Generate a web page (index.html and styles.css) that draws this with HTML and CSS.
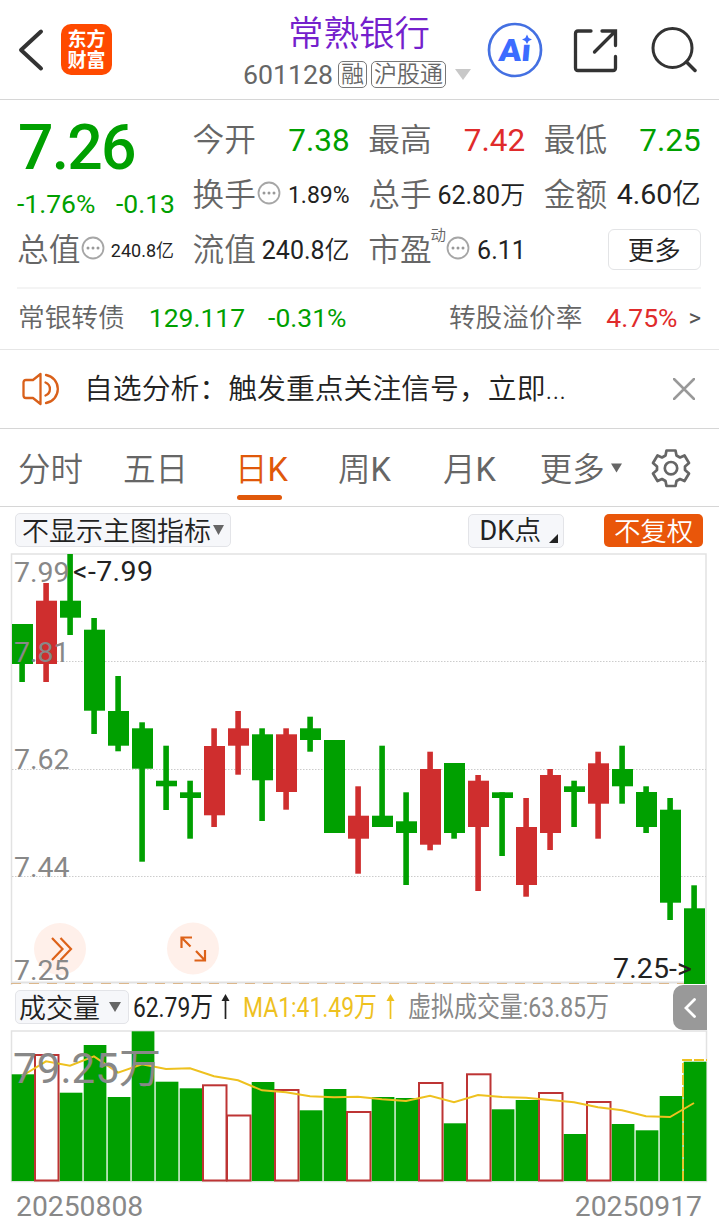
FILE: index.html
```html
<!DOCTYPE html>
<html lang="zh-CN">
<head>
<meta charset="utf-8">
<title>常熟银行 601128</title>
<link rel="stylesheet" href="styles.css">
</head>
<body>
<header class="header">
  <svg class="back" width="30" height="50" viewBox="0 0 30 50"><path d="M25 6.500L5 25L25 43.500" fill="none" stroke="#333" stroke-width="4" stroke-linecap="round" stroke-linejoin="round"/></svg>
  <div class="logo"><span>东方</span><span>财富</span></div>
  <div class="title">
    <h1>常熟银行</h1>
    <div class="code"><span>601128</span><b class="tag">融</b><b class="tag">沪股通</b><svg width="16" height="11" viewBox="0 0 16 11"><path d="M0 0H16L8 11Z" fill="#c8c8c8"/></svg></div>
  </div>
  <svg class="ic" width="56" height="56" viewBox="0 0 56 56"><text class="ai" transform="translate(11 38.500) skewX(-5)" textLength="32" lengthAdjust="spacingAndGlyphs">Ai</text><path d="M35 11H45.500V21.500H35Z" fill="#fff"/><path d="M40 12.500L41.700 16L45 17.500L41.700 19L40 22L38.300 19L35 17.500L38.300 16Z" fill="#3c6cff"/><circle cx="28" cy="28" r="26" fill="none" stroke="#4470e2" stroke-width="2.700"/></svg>
  <svg class="ic" width="46" height="46" viewBox="0 0 46 46"><path d="M18 4H5Q2.500 4 2.500 6.500V41Q2.500 43.500 5 43.500H40Q42.500 43.500 42.500 41V29.500M29 4H42.500V18.500M42 4.500L21.500 25" fill="none" stroke="#333" stroke-width="3.300" stroke-linecap="round"/></svg>
  <svg class="ic search" width="46" height="46" viewBox="0 0 46 46"><circle cx="21.500" cy="21" r="19.500" fill="none" stroke="#333" stroke-width="3"/><path d="M35.500 35L44 43.500" stroke="#333" stroke-width="3.500" stroke-linecap="round"/></svg>
</header>

<section class="quote">
  <div class="price">
    <strong>7.26</strong>
    <div class="change"><span>-1.76%</span><span>-0.13</span></div>
  </div>
  <div class="cell"><i>今开</i><em class="s31 green">7.38</em></div>
  <div class="cell"><i>最高</i><em class="s31 red">7.42</em></div>
  <div class="cell"><i>最低</i><em class="s31 green">7.25</em></div>
  <div class="cell"><i>换手</i><svg class="dots" viewBox="0 0 24 24"><use href="#dots"/></svg><em class="s23">1.89%</em></div>
  <div class="cell"><i>总手</i><em class="s25">62.80<u>万</u></em></div>
  <div class="cell"><i>金额</i><em class="s28">4.60<u>亿</u></em></div>
  <div class="cell"><i>总值</i><svg class="dots" viewBox="0 0 24 24"><g id="dots"><circle cx="12" cy="12" r="10.500" fill="none" stroke="#a6a6a6" stroke-width="1.800"/><g fill="#999"><circle cx="7" cy="12" r="1.500"/><circle cx="12" cy="12" r="1.500"/><circle cx="17" cy="12" r="1.500"/></g></g></svg><em class="s18">240.8<u>亿</u></em></div>
  <div class="cell"><i>流值</i><em class="s25">240.8<u>亿</u></em></div>
  <div class="cell pe"><i>市盈</i><sup>动</sup><svg class="dots" viewBox="0 0 24 24"><use href="#dots"/></svg><em class="s25">6.11</em></div>
  <div class="cell"><button class="more">更多</button></div>
</section>

<section class="bond">
  <span class="name">常银转债</span><span class="green val">129.117</span><span class="green">-0.31%</span>
  <span class="name rate">转股溢价率</span><span class="red">4.75%</span><span class="gt">&gt;</span>
</section>

<section class="notice">
  <svg width="40" height="34" viewBox="0 0 40 34"><g fill="none" stroke="#d9601a" stroke-width="2.300" stroke-linejoin="round" stroke-linecap="round"><path d="M18.500 2L11 8H4Q1.500 8 1.500 10.500V23.500Q1.500 26 4 26H11L18.500 32Z"/><path d="M23.500 10.500A7 7 0 0 1 23.500 23.500M24 3A14.200 14.200 0 0 1 24 31"/></g></svg>
  <span class="msg">自选分析：触发重点关注信号，立即...</span>
  <svg class="close" width="22" height="22" viewBox="0 0 22 22"><path d="M1 1L21 21M21 1L1 21" stroke="#999" stroke-width="2.500" stroke-linecap="round"/></svg>
</section>

<nav class="tabs">
  <a>分时</a><a>五日</a><a class="on">日<span>K</span></a><a>周<span>K</span></a><a>月<span>K</span></a><a>更多<svg width="11" height="10" viewBox="0 0 12 10"><path d="M0 0H12L6 10Z" fill="#666"/></svg></a>
  <svg class="gear" width="40" height="40" viewBox="-20 -20 40 40"><g fill="none" stroke="#666" stroke-width="2.700" stroke-linejoin="round"><path d="M-4.500 -17.500H4.500L5.500 -12.500L9 -10.500L13.500 -12.500L18 -5L14 -1.500V2L18 5.500L13.500 13L9 11L5.500 13L4.500 18H-4.500L-5.500 13L-9 11L-13.500 13L-18 5.500L-14 2V-1.500L-18 -5L-13.500 -12.500L-9 -10.500L-5.500 -12.500Z"/><circle cx="0" cy="0.200" r="6.200"/></g></svg>
</nav>

<div class="tools">
  <span class="chip main">不显示主图指标<svg width="11" height="10" viewBox="0 0 11 10"><path d="M0 0H11L5.500 10Z" fill="#666"/></svg></span>
  <span class="chip dk"><span>DK</span>点<svg width="9" height="9" viewBox="0 0 9 9"><path d="M9 0V9H0Z" fill="#222"/></svg></span>
  <span class="adjust">不复权</span>
</div>

<svg class="kline" id="kline" width="719" height="435" viewBox="0 550 719 435">
  <path d="M11.500 985V554H706V985" fill="none" stroke="#e2e2e2" stroke-width="1.500"/>
  <path d="M12 661.500H706M12 769.500H706M12 876.500H706" stroke="#ccc" stroke-dasharray="1.500 1.500"/>
  <path d="M11 982.500H707" stroke="#e2e2e2" stroke-width="2"/>
  <g id="candles"></g>
  <path d="M11 983.500H684" stroke="#dcb78c" stroke-dasharray="10 8"/>
  <g fill="#fff0ea"><circle cx="60" cy="949" r="26"/><circle cx="193" cy="948.500" r="26"/></g>
  <path d="M52 938L62.500 949L52 960M60.500 938L71 949L60.500 960M181.500 948V937.500H192M181.500 937.500L190.500 946.500M194.500 960.500H205V950M196 951L205 960.500" fill="none" stroke="#dd6219" stroke-width="2.200"/>
  <g class="axis"><text x="14" y="582">7.99</text><text x="14" y="662">7.81</text><text x="14" y="769">7.62</text><text x="14" y="877">7.44</text><text x="14" y="980">7.25</text></g>
  <g class="mark"><text x="73" y="581" textLength="80">&lt;-7.99</text><text x="613" y="978" textLength="79">7.25-&gt;</text></g>
</svg>

<div class="volbar">
  <span class="chip vol">成交量<svg width="12" height="10" viewBox="0 0 12 10"><path d="M0 0H12L6 10Z" fill="#666"/></svg></span>
  <svg class="legend" width="544" height="45" viewBox="129 985 544 45">
    <text x="133" y="1017" textLength="80" lengthAdjust="spacingAndGlyphs" fill="#222">62.79万</text>
    <path d="M225.500 1019V997" stroke="#222" stroke-width="1.700"/><path d="M225.500 994L229.500 1001H221.500Z" fill="#222"/>
    <text x="243" y="1017" textLength="134" lengthAdjust="spacingAndGlyphs" fill="#eec11f">MA1:41.49万</text>
    <path d="M390.500 1019V997" stroke="#eec11f" stroke-width="1.700"/><path d="M390.500 994L394.500 1001H386.500Z" fill="#eec11f"/>
    <text x="408" y="1017" textLength="201" lengthAdjust="spacingAndGlyphs" fill="#888">虚拟成交量:63.85万</text>
  </svg>
  <span class="handle"><svg width="12" height="20" viewBox="0 0 12 20"><path d="M10.500 1.500L2 10L10.500 18.500" fill="none" stroke="#fff" stroke-width="2.800" stroke-linecap="round"/></svg></span>
</div>

<svg class="volume" width="719" height="153" viewBox="0 1030 719 153">
  <path d="M11.500 1181.500V1031H706.500V1181.500Z" fill="none" stroke="#e2e2e2" stroke-width="1.500"/>
  <g id="bars"></g>
  <path d="M683 1181V1060H707" fill="none" stroke="#eec11f" stroke-width="1.800" stroke-dasharray="10 2"/>
  <path id="ma" fill="none" stroke="#eec11f" stroke-width="2"/>
  <text class="peak" x="13" y="1082.500" textLength="148">79.25万</text>
</svg>
<footer class="dates"><span>20250808</span><span>20250917</span></footer>
<script src="chart.js"></script>
</body>
</html>
```
FILE: styles.css
```css
* { box-sizing: border-box; }
body {
  margin: 0; width: 719px; height: 1227px; overflow: hidden; background: #fff; color: #222;
  font-family: Roboto, "Noto Sans CJK SC", sans-serif; line-height: 1;
}
svg { display: block; flex: none; }
i, em, u { font-style: normal; text-decoration: none; }
.green { color: #00a000 !important; }
.red { color: #e02b2b !important; }

.header {
  display: grid; grid-template-columns: 61px 182px 232px 79px 84px 70px;
  height: 100px; align-items: center; border-bottom: 1px solid #d6d6d6;
}
.back { margin-left: 16px; }
.logo {
  width: 51px; height: 51px; border-radius: 10px; background: #ff4a00; color: #fff;
  display: flex; flex-direction: column; align-items: center; justify-content: center;
  gap: 2px; font-size: 19px; font-weight: 700;
}
.title { display: flex; flex-direction: column; align-items: center; padding-top: 6px; }
.title h1 { margin: 0; font-size: 35.5px; font-weight: 350; color: #7420cc; line-height: 44px; }
.code { display: flex; align-items: center; width: 232px; font-size: 26.700px; color: #666; line-height: 38px; }
.tag {
  font-weight: 350; font-size: 23px; line-height: 25px; height: 27px; padding: 0 2px;
  border: 1px solid #777; border-radius: 5px; margin-left: 5px; white-space: nowrap;
}
.code .tag + .tag { margin-left: 4px; }
.code svg { margin-left: 9px; }
.ic { justify-self: center; }
.search { margin-left: 2px; }
.ai { font: 900 31px Roboto, sans-serif; fill: #3c6cff; }

.quote {
  display: grid; grid-template-columns: repeat(4, 156px); column-gap: 19.600px;
  grid-template-rows: repeat(3, 55px); padding: 13px 0 0 18px; height: 187px;
}
.price { grid-row: span 2; color: #00a000; padding-top: 5px; }
.price strong { display: block; font-size: 62.500px; font-weight: 500; line-height: 60px; letter-spacing: -1.8px; }
.change { display: flex; justify-content: space-between; font-size: 26.500px; line-height: 51px; margin-left: -1px; margin-right: -1px; }
.cell { display: flex; align-items: center; min-width: 0; white-space: nowrap; }
.cell i { font-size: 31.700px; color: #666; font-weight: 350; line-height: 55px; margin-left: -1px; }
.cell em { margin-left: auto; color: #222; }
.cell u { font-weight: 350; }
.s31 { font-size: 31.500px; }
.s28 { font-size: 28.500px; }
.s25 { font-size: 25px; }
.s23 { font-size: 23px; }
.s18 { font-size: 18px; }
.dots { width: 24px; height: 24px; margin: -6px 0 0 1px; }
.pe sup { font-size: 15.500px; font-weight: 350; color: #666; align-self: flex-start; margin: 6px 0 0 -1px; line-height: 15px; }
.pe .dots { margin-left: 0; }
.pe em { margin: 0 0 0 7px; }
.more {
  margin: -3px 0 0 63px; width: 93px; height: 41px; border: 1.500px solid #e3e4e6; border-radius: 6px;
  background: #fff; color: #222; font: 350 26.500px/36px "Noto Sans CJK SC", sans-serif; padding: 0; flex: none;
}

.bond {
  display: flex; align-items: center; height: 63px; border-bottom: 1px solid #e6e6e6;
  padding: 0 18px; font-size: 26.500px; background: linear-gradient(#f4f4f4, #f4f4f4) 17px 0 / 684px 2px no-repeat;
}
.name { font-weight: 350; color: #666; font-size: 26.700px; padding-top: 1px; }
.val { margin: 0 23px 0 24px; }
.rate { margin-left: auto; margin-right: 24px; }
.gt { color: #555; font-size: 24px; margin-left: 11px; }

.notice { display: flex; align-items: center; height: 79px; padding: 0 24px 0 22px; border-bottom: 1px solid #d6d6d6; }
.msg { font-size: 28.850px; font-weight: 350; margin-left: 22px; line-height: 40px; }
.close { margin-left: auto; }

.tabs { display: flex; align-items: center; height: 78px; border-bottom: 1px solid #d6d6d6; padding-left: 18px; font-size: 32.500px; color: #666; }
.tabs a { display: flex; align-items: center; height: 77px; padding-top: 6px; margin-right: 40px; font-weight: 350; white-space: nowrap; }
.tabs span, .dk span { font-weight: 400; }
.tabs a:nth-child(2) { margin-right: 47px; }
.tabs a:nth-child(3) { margin-right: 50px; }
.tabs a:nth-child(4) { margin-right: 52px; }
.tabs a:nth-child(5) { margin-right: 44px; }
.tabs a:nth-child(6) { margin-right: 29px; }
.tabs a svg { margin: -6px 0 0 6px; }
.tabs .on { color: #e0580a; position: relative; }
.tabs .on::after { content: ""; position: absolute; left: 2px; bottom: 6px; width: 45px; height: 5px; border-radius: 2.500px; background: #e0580a; }

.tools { display: flex; height: 43px; padding: 6px 16px 0 15px; }
.chip {
  display: flex; align-items: center; height: 34px; border: 1.500px solid #e3e4e8; border-radius: 5px;
  background: #f6f7fa; color: #222; font-size: 27px; font-weight: 350; white-space: nowrap; padding-top: 4px;
}
.chip svg { margin-top: -4px; }
.main { width: 217px; padding-left: 6px; }
.main svg { margin-left: 2px; }
.dk { width: 96px; margin: 1px 40px 0 237px; padding: 1px 0 0 10px; }
.dk svg { margin: 14px 0 0 8px; }
.adjust { width: 99px; height: 33px; margin-top: 1px; border-radius: 5px; background: #e9560a; color: #fff; font-size: 26.500px; font-weight: 350; line-height: 35px; text-align: center; }

.kline { overflow: visible; }
.axis { font-size: 28.500px; fill: #888; }
.mark { font-size: 28.500px; fill: #222; }
.volbar { display: flex; height: 45px; padding-left: 15px; }
.vol { width: 114px; margin-top: 5px; padding-left: 3px; }
.vol svg { margin-left: 9px; }
.legend { font-size: 28px; }
.handle { width: 34px; height: 45px; border-radius: 10px 0 0 10px; background: #999; display: flex; align-items: center; justify-content: center; }
.peak { font-size: 42px; fill: #888; }
.dates { display: flex; justify-content: space-between; padding: 7px 17px 0 16px; font-size: 28.300px; line-height: 34px; color: #888; }
```
FILE: chart.js
```js
// Each candle: colour, wick top, body top, body bottom, wick bottom, volume bar top.
const days = [
  ['g',624,624,664,682,1074.3],['r',583,600.7,664,682,1055],['g',554,600.7,617.7,635,1092.7],
  ['g',618,629.7,710.7,734,1045],['g',676,711,745.7,751.3,1097],['g',722.3,728.3,768.7,861.7,1031.3],
  ['g',745.7,780.7,786.3,810,1081.7],['g',780.7,792.3,798,838.7,1088.3],['r',728.3,746,815.3,827,1085.3],
  ['r',711,728.3,745.7,774.7,1115.5],['g',728.3,734.3,780.3,821,1082],['r',728.3,734.3,792,809.7,1090],
  ['g',716.7,728.3,740,751.7,1110.3],['g',740,740,833,833,1089],['r',786.3,815.7,838.7,873.7,1112],
  ['g',745.7,815.7,827,827,1097],['g',792.3,821.3,833,885,1098],['r',751.7,769,844.7,850.3,1083],
  ['g',763,763,833,838.7,1123.3],['r',775,780.7,827,891,1074.3],['g',792.3,792.3,798,856,1109.3],
  ['r',798,827,885,896.7,1100],['r',769,775,833,850,1093],['g',780.7,786.3,792,827,1134],
  ['r',751.7,763.3,803.7,838.7,1102],['g',745.7,769,786.3,803.7,1124],['g',786.3,792,827,833,1130.3],
  ['g',798,809.7,902.7,920,1096],['g',885.3,908.3,984,984,1061.7]
];
const filledVolume = new Set([21]);
const ma = [1076,1061.3,1065.7,1056.3,1072.7,1064.3,1069,1068.3,1076.3,1080.3,1090.3,1092.3,1096.3,1097.3,1096.7,1099.3,1101,1095.7,1102.3,1095,1097,1097.7,1100,1102.3,1107.3,1110.3,1116.3,1117,1103];
const colours = { g: '#00a000', r: '#cf2e2e' };
let candles = '', bars = '', hollow = '';
days.forEach(([c, high, top, bottom, low, vol], i) => {
  const x = 12 + 24 * i;
  candles += `<g fill="${colours[c]}"><rect x="${x + 7.3}" y="${high}" width="5.600" height="${low - high}"/><rect x="${x}" y="${top}" width="21" height="${bottom - top}"/></g>`;
  if (c === 'g' || filledVolume.has(i)) bars += `<rect x="${x - 0.3}" y="${vol}" width="22.700" height="${1181 - vol}" fill="#00a000"/>`;
  else hollow += `<rect x="${x - 1}" y="${vol}" width="23.500" height="${1180.5 - vol}" fill="#fff" stroke="#bd3434" stroke-width="2"/>`;
});
document.getElementById('candles').innerHTML = candles;
document.getElementById('bars').innerHTML = bars + hollow;
document.getElementById('ma').setAttribute('d', 'M' + ma.map((y, i) => `${22 + 24 * i} ${y}`).join('L'));
```
